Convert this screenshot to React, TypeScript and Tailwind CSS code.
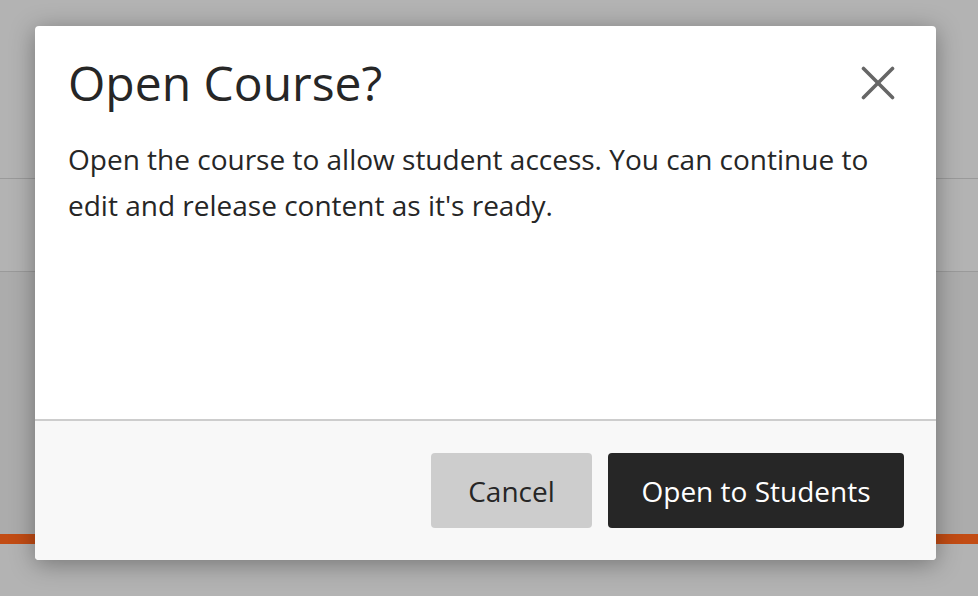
export default function App() {
  return (
    <div className="relative w-[978px] h-[596px] overflow-hidden bg-[#b3b3b3] font-['Open_Sans',sans-serif]">
      {/* page behind the overlay */}
      <div className="flex flex-col">
        <div className="h-[178px]" />
        <div className="h-[94px] border-t border-b border-[#9a9a9a] flex items-center">
          <span className="-ml-[14px] text-[24px] text-[#333]">k</span>
        </div>
        <div className="h-[262px] bg-[#acacac]" />
        <div className="h-[10px] bg-[#c24c14]" />
      </div>

      {/* modal */}
      <div className="absolute left-[35px] top-[26px] w-[901px] h-[534px] flex flex-col rounded-[4px] bg-white shadow-[0_4px_24px_rgba(0,0,0,0.35)] overflow-hidden">
        <div className="flex-1 pl-[33px] pr-[41px] pt-[22px]">
          <div className="flex items-start justify-between">
            <h1 className="text-[48px] leading-[70px] text-[#262626]">Open Course?</h1>
            <button className="mt-[18px]" aria-label="Close">
              <svg width="34" height="34" viewBox="0 0 34 34" fill="none" stroke="#666" strokeWidth="3.6" strokeLinecap="round">
                <line x1="2.5" y1="2.5" x2="31.5" y2="31.5" />
                <line x1="31.5" y1="2.5" x2="2.5" y2="31.5" />
              </svg>
            </button>
          </div>
          <p className="mt-[18px] text-[28px] leading-[46px] text-[#262626] max-w-[820px]">
            Open the course to allow student access. You can continue to edit and release content as it's ready.
          </p>
        </div>
        <div className="h-[141px] border-t-2 border-[#cdcdcd] bg-[#f8f8f8] flex items-start justify-end gap-[16px] pr-[32px] pt-[32px]">
          <button className="w-[161px] h-[75px] rounded-[4px] bg-[#cdcdcd] text-[28px] text-[#262626]">
            Cancel
          </button>
          <button className="w-[296px] h-[75px] rounded-[4px] bg-[#262626] text-[28px] text-white">
            Open to Students
          </button>
        </div>
      </div>
    </div>
  );
}
